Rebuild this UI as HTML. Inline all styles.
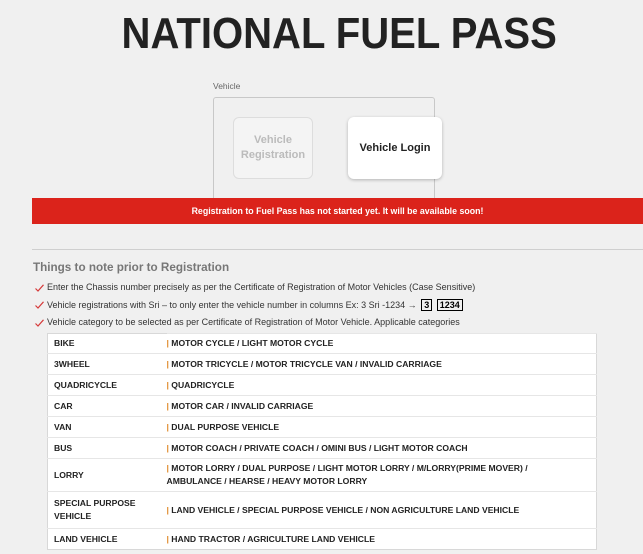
<!DOCTYPE html>
<html><head><style>
*{margin:0;padding:0;box-sizing:border-box}
body{width:643px;height:554px;background:#f0f0f0;font-family:"Liberation Sans",sans-serif;position:relative;overflow:hidden;color:#222}
.a{position:absolute;white-space:nowrap}
#title{left:0;width:678px;top:11px;text-align:center;font-size:44px;font-weight:bold;color:#222;line-height:46px}
#title span{display:inline-block;transform:scaleX(0.91);transform-origin:center}
.btn{position:absolute;top:117px;height:62px;border-radius:6px;display:flex;align-items:center;justify-content:center;text-align:center;font-weight:bold;font-size:11px;line-height:15px}
.li{position:absolute;left:35px;font-size:9px;color:#333;white-space:nowrap}
.li svg{position:absolute;left:0;top:2px}
.li span{position:absolute;left:12px;top:0}
table{position:absolute;left:47px;top:333px;width:550px;border-collapse:collapse;background:#fff;border:1px solid #d8d8d8}
td{border-top:1px solid #e6e6e6;font-size:8.6px;font-weight:bold;color:#222;padding:0 0 0 6px;vertical-align:middle;line-height:13px}
td.c2{padding-left:0}
.p{color:#e08a2a}
.bx{display:inline-block;border:1px solid #000;padding:0 2px;font-weight:bold;color:#000;line-height:10px;margin-left:2px}
</style></head><body>
<div class="a" id="title"><span>NATIONAL FUEL PASS</span></div>
<div class="a" style="left:213px;top:81px;font-size:8.5px;color:#666">Vehicle</div>
<div class="a" style="left:213px;top:97px;width:222px;height:104px;border:1px solid #c8c8c8;border-radius:3px"></div>
<div class="btn" style="left:233px;width:80px;background:#f4f4f4;border:1px solid #ddd;color:#bbb">Vehicle<br>Registration</div>
<div class="btn" style="left:348px;width:94px;background:#fff;box-shadow:0 1px 3px rgba(0,0,0,.25);color:#222">Vehicle Login</div>
<div class="a" style="left:32px;top:198px;width:611px;height:26px;background:#db231b;color:#fff;font-size:8.8px;font-weight:bold;text-align:center;line-height:26px">Registration to Fuel Pass has not started yet. It will be available soon!</div>
<div class="a" style="left:32px;top:249px;width:611px;height:1px;background:#cfcfcf"></div>
<div class="a" style="left:33px;top:261px;font-size:11.7px;font-weight:bold;color:#777">Things to note prior to Registration</div>
<div class="li" style="top:282px"><svg width="9" height="8" viewBox="0 0 9 8"><path d="M0.5 4.5 L3 7 L8.5 0.8" stroke="#d63a3a" stroke-width="1.2" fill="none"/></svg><span>Enter the Chassis number precisely as per the Certificate of Registration of Motor Vehicles (Case Sensitive)</span></div>
<div class="li" style="top:299px"><svg width="9" height="8" viewBox="0 0 9 8"><path d="M0.5 4.5 L3 7 L8.5 0.8" stroke="#d63a3a" stroke-width="1.2" fill="none"/></svg><span>Vehicle registrations with Sri – to only enter the vehicle number in columns Ex: 3 Sri -1234 → <b class="bx">3</b> <b class="bx">1234</b></span></div>
<div class="li" style="top:317px"><svg width="9" height="8" viewBox="0 0 9 8"><path d="M0.5 4.5 L3 7 L8.5 0.8" stroke="#d63a3a" stroke-width="1.2" fill="none"/></svg><span>Vehicle category to be selected as per Certificate of Registration of Motor Vehicle. Applicable categories</span></div>
<table>
<colgroup><col style="width:119px"><col></colgroup>
<tr style="height:20px"><td style="border-top:0">BIKE</td><td class="c2"><span class="p">|</span> MOTOR CYCLE / LIGHT MOTOR CYCLE</td></tr>
<tr style="height:21px"><td>3WHEEL</td><td class="c2"><span class="p">|</span> MOTOR TRICYCLE / MOTOR TRICYCLE VAN / INVALID CARRIAGE</td></tr>
<tr style="height:21px"><td>QUADRICYCLE</td><td class="c2"><span class="p">|</span> QUADRICYCLE</td></tr>
<tr style="height:21px"><td>CAR</td><td class="c2"><span class="p">|</span> MOTOR CAR / INVALID CARRIAGE</td></tr>
<tr style="height:21px"><td>VAN</td><td class="c2"><span class="p">|</span> DUAL PURPOSE VEHICLE</td></tr>
<tr style="height:21px"><td>BUS</td><td class="c2"><span class="p">|</span> MOTOR COACH / PRIVATE COACH / OMINI BUS / LIGHT MOTOR COACH</td></tr>
<tr style="height:33px"><td>LORRY</td><td class="c2"><span class="p">|</span> MOTOR LORRY / DUAL PURPOSE / LIGHT MOTOR LORRY / M/LORRY(PRIME MOVER) /<br>AMBULANCE / HEARSE / HEAVY MOTOR LORRY</td></tr>
<tr style="height:37px"><td>SPECIAL PURPOSE<br>VEHICLE</td><td class="c2"><span class="p">|</span> LAND VEHICLE / SPECIAL PURPOSE VEHICLE / NON AGRICULTURE LAND VEHICLE</td></tr>
<tr style="height:21px"><td>LAND VEHICLE</td><td class="c2"><span class="p">|</span> HAND TRACTOR / AGRICULTURE LAND VEHICLE</td></tr>
</table>
</body></html>
